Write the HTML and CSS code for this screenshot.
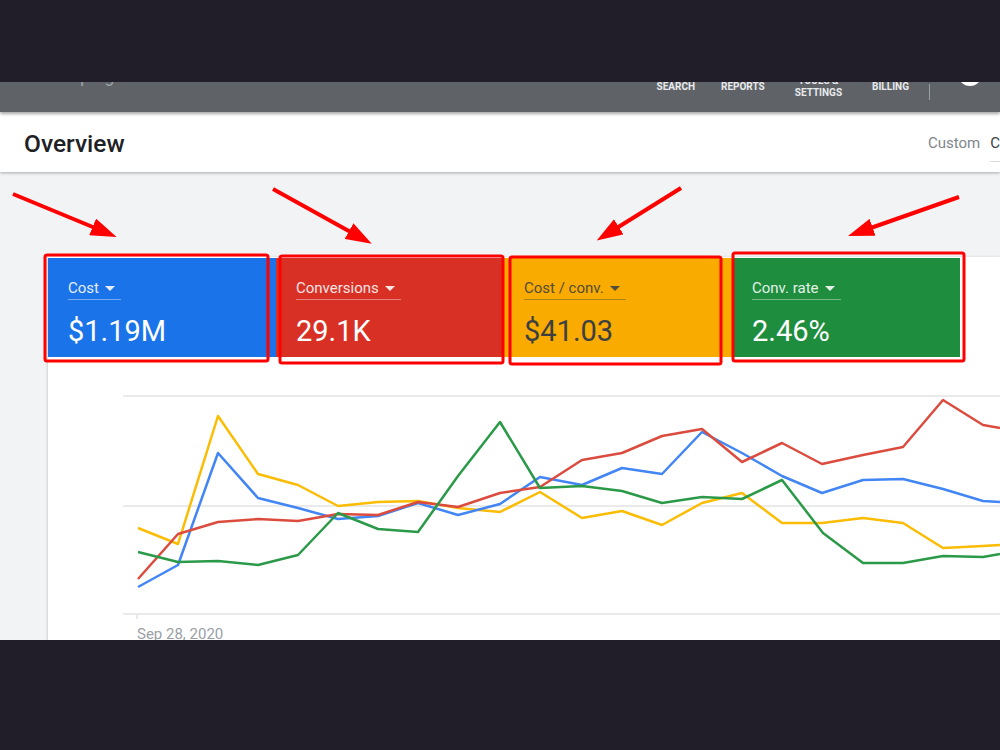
FILE: index.html
```html
<!DOCTYPE html>
<html lang="en">
<head>
  <meta charset="UTF-8">
  <title>Overview</title>
  <link rel="stylesheet" href="styles.css">
</head>
<body>
  <div class="screen">
    <div class="band"></div>

    <div class="app">
      <div class="topbar">
        <span class="crumbs">All campaigns &nbsp; Account overview 123-456</span>
        <nav class="nav">
          <a class="nav-item">SEARCH</a>
          <a class="nav-item">REPORTS</a>
          <a class="nav-item">TOOLS &amp;<br>SETTINGS</a>
          <a class="nav-item">BILLING</a>
          <span class="nav-divider"></span>
          <span class="avatar"></span>
        </nav>
      </div>

      <div class="header">
        <h1>Overview</h1>
        <div class="range">
          <span class="range-label">Custom</span>
          <span class="range-value">Current month</span>
        </div>
      </div>

      <main class="content">
        <section class="card">
          <div class="tiles">
            <div class="tile blue">
              <div class="tile-label">Cost <span class="caret"></span></div>
              <div class="tile-value">$1.19M</div>
            </div>
            <div class="tile red">
              <div class="tile-label">Conversions <span class="caret"></span></div>
              <div class="tile-value">29.1K</div>
            </div>
            <div class="tile yellow">
              <div class="tile-label">Cost / conv. <span class="caret"></span></div>
              <div class="tile-value">$41.03</div>
            </div>
            <div class="tile green">
              <div class="tile-label">Conv. rate <span class="caret"></span></div>
              <div class="tile-value">2.46%</div>
            </div>
          </div>

          <svg class="chart" width="952" height="262" viewBox="48 357 952 262">
            <line class="grid" x1="123" y1="396" x2="1000" y2="396"/>
            <line class="grid" x1="123" y1="506" x2="1000" y2="506"/>
            <line class="grid" x1="123" y1="614" x2="1000" y2="614"/>
            <line class="grid" x1="137" y1="614" x2="137" y2="621"/>
            <polyline class="series s-yellow" points="138,528 178,544 218,416 258,474 298,485 338,506 378,502 418,501 458,508 500,512 540,492 582,518 622,511 662,525 702,503 742,493 782,523 822,523 863,518 903,523 943,548 983,546 1000,545"/>
            <polyline class="series s-blue" points="138,587 178,565 218,453 258,498 298,508 338,519 378,516 418,503 458,515 500,504 540,477 582,485 622,468 662,474 702,432 742,453 782,476 822,493 863,480 903,479 943,489 983,501 1000,502"/>
            <polyline class="series s-red" points="138,579 178,534 218,522 258,519 298,521 338,514 378,515 418,502 458,507 500,493 540,487 582,460 622,453 662,436 702,429 742,462 782,443 822,464 863,455 903,447 943,400 983,425 1000,428"/>
            <polyline class="series s-green" points="138,552 178,562 218,561 258,565 298,555 338,513 378,529 418,532 458,476 500,422 540,488 582,486 622,491 662,503 702,497 742,499 782,480 823,533 863,563 903,563 943,556 983,557 1000,554"/>
          </svg>
          <div class="axis">Sep 28, 2020</div>
        </section>
      </main>
    </div>

    <div class="band bottom"></div>

    <!-- red annotations drawn over the screenshot -->
    <svg class="marks" width="1000" height="750" viewBox="0 0 1000 750">
      <defs>
        <marker id="head" markerUnits="userSpaceOnUse" markerWidth="26" markerHeight="18" refX="8" refY="9" orient="auto">
          <path d="M0,0 L26,9 L0,18 z" fill="#ff0000"/>
        </marker>
      </defs>
      <rect x="45" y="255" width="223" height="106" rx="2"/>
      <rect x="280" y="256" width="223" height="107" rx="2"/>
      <rect x="510" y="257" width="211" height="107" rx="2"/>
      <rect x="733" y="253" width="231" height="108" rx="2"/>
      <line x1="13" y1="194" x2="100" y2="230" marker-end="url(#head)"/>
      <line x1="273" y1="189" x2="356" y2="235" marker-end="url(#head)"/>
      <line x1="681" y1="188" x2="612" y2="231" marker-end="url(#head)"/>
      <line x1="959" y1="197" x2="865" y2="230" marker-end="url(#head)"/>
    </svg>
  </div>
</body>
</html>
```

FILE: styles.css
```css
body {
  margin: 0;
  font-family: Roboto, "Liberation Sans", sans-serif;
  background-color: #211e29;
}
.screen {
  position: relative;
  width: 1000px;
  height: 750px;
  overflow: hidden;
}
.band {
  height: 82px;
  background-color: #211e29;
}
.band.bottom {
  height: 110px;
}
.app {
  height: 558px;
  overflow: hidden;
  background-color: #f1f3f4;
}

/* top bar, cut off by the screenshot */
.topbar {
  position: relative;
  z-index: 2;
  display: flex;
  height: 30px;
  overflow: hidden;
  background-color: #5f6368;
  box-shadow: 0 2px 3px rgba(0, 0, 0, 0.35);
}
.crumbs {
  align-self: flex-start;
  margin: -17px 0 0 20px;
  font-size: 18px;
  line-height: 22px;
  color: #9ea2a8;
  white-space: nowrap;
}
.nav {
  display: flex;
  align-items: center;
  margin: -18px 0 0 auto;
  height: 46px;
}
.nav-item {
  font-size: 10px;
  font-weight: bold;
  line-height: 12px;
  color: #e8eaed;
  text-align: center;
  margin-right: 26px;
}
.nav-item:nth-child(2) { margin-right: 30px; }
.nav-item:nth-child(3) { margin-right: 30px; }
.nav-item:nth-child(4) { margin-right: 20px; }
.nav-divider {
  width: 1px;
  height: 16px;
  margin-top: 10px;
  background-color: #9aa0a6;
}
.avatar {
  align-self: flex-start;
  width: 24px;
  height: 24px;
  margin: -2px 18px 0 28px;
  border-radius: 50%;
  background-color: #fff;
}

/* page header */
.header {
  position: relative;
  z-index: 1;
  display: flex;
  align-items: center;
  height: 60px;
  padding: 2px 0 0 24px;
  box-sizing: border-box;
  background-color: #fff;
  box-shadow: 0 1px 3px rgba(0, 0, 0, 0.3);
}
h1 {
  margin: 0;
  font-size: 24.5px;
  font-weight: 500;
  color: #202124;
}
.range {
  display: flex;
  flex-shrink: 0;
  gap: 10px;
  width: 72px;
  margin-left: auto;
  white-space: nowrap;
  font-size: 15px;
}
.range-label {
  color: #80868b;
}
.range-value {
  padding-bottom: 8px;
  margin-bottom: -10px;
  color: #3c4043;
  border-bottom: 1px solid #dadce0;
}

/* overview card */
.content {
  padding: 85px 0 0 48px;
}
.card {
  background-color: #fff;
  box-shadow: 0 1px 3px rgba(0, 0, 0, 0.25);
}
.tiles {
  display: flex;
  padding-top: 1px;
}
.tile {
  width: 228px;
  height: 99px;
  padding: 20px;
  box-sizing: border-box;
  color: #fff;
}
.blue { background-color: #1a73e8; }
.red { background-color: #d93025; }
.yellow { background-color: #f9ab00; color: #3c4043; }
.green { background-color: #1e8e3e; }
.tile-label {
  display: inline-flex;
  align-items: center;
  gap: 6px;
  padding: 0 6px 2px 0;
  font-size: 15px;
  line-height: 18px;
  opacity: 0.88;
  border-bottom: 1px solid rgba(255, 255, 255, 0.45);
}
.yellow .tile-label {
  border-bottom-color: rgba(60, 64, 67, 0.45);
}
.caret {
  width: 0;
  height: 0;
  border-left: 5px solid transparent;
  border-right: 5px solid transparent;
  border-top: 5px solid currentColor;
}
.tile-value {
  margin-top: 14px;
  font-size: 29px;
  line-height: 34px;
}

.chart {
  display: block;
}
.grid {
  stroke: #e3e3e3;
  stroke-width: 1.5;
}
.series {
  fill: none;
  stroke-width: 2.5;
  stroke-linejoin: round;
}
.s-blue { stroke: #4285f4; }
.s-red { stroke: #db4c3f; }
.s-yellow { stroke: #fbbc04; }
.s-green { stroke: #2b9a48; }
.axis {
  margin-top: 7px;
  padding-left: 89px;
  font-size: 15px;
  line-height: 16px;
  color: #9aa0a6;
}

/* annotation overlay */
.marks {
  position: absolute;
  top: 0;
  left: 0;
  pointer-events: none;
}
.marks rect {
  fill: none;
  stroke: #ff0000;
  stroke-width: 3;
}
.marks line {
  stroke: #ff0000;
  stroke-width: 4;
}
```
